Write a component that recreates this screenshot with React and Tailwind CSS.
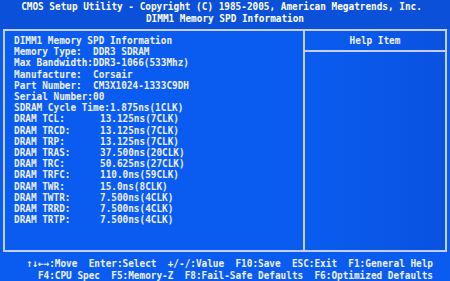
const SPD_LINES = [
  "DIMM1 Memory SPD Information",
  "Memory Type:  DDR3 SDRAM",
  "Max Bandwidth:DDR3-1066(533Mhz)",
  "Manufacture:  Corsair",
  "Part Number:  CM3X1024-1333C9DH",
  "Serial Number:00",
  "SDRAM Cycle Time:1.875ns(1CLK)",
];

const TIMINGS = [
  ["DRAM TCL:", "13.125ns(7CLK)"],
  ["DRAM TRCD:", "13.125ns(7CLK)"],
  ["DRAM TRP:", "13.125ns(7CLK)"],
  ["DRAM TRAS:", "37.500ns(20CLK)"],
  ["DRAM TRC:", "50.625ns(27CLK)"],
  ["DRAM TRFC:", "110.0ns(59CLK)"],
  ["DRAM TWR:", "15.0ns(8CLK)"],
  ["DRAM TWTR:", "7.500ns(4CLK)"],
  ["DRAM TRRD:", "7.500ns(4CLK)"],
  ["DRAM TRTP:", "7.500ns(4CLK)"],
];

// BIOS glyphs are taller than DejaVu's at this width
const tall = "origin-center scale-y-[1.15]";

export default function App() {
  return (
    <div className="flex h-[281px] w-[450px] flex-col overflow-hidden bg-[#0a5cf0] font-['DejaVu_Sans_Mono',monospace] text-[9.4px] font-bold text-[#eef1fa]">
      {/* title band */}
      <header className="flex h-[29px] shrink-0 flex-col items-center bg-[#0b50d8] pt-[1px] leading-[12px] whitespace-pre text-white">
        <div className={`pr-[7px] ${tall}`}>CMOS Setup Utility - Copyright (C) 1985-2005, American Megatrends, Inc.</div>
        <div className={tall}>DIMM1 Memory SPD Information</div>
      </header>

      {/* main box */}
      <div className="mx-[3px] flex h-[223px] shrink-0 border-2 border-[#c4cfee]">
        <div className="w-[300px] shrink-0 border-r-2 border-[#c4cfee] pl-[9px] pt-[3px] leading-[11.2px] whitespace-pre">
          {SPD_LINES.map((l) => (
            <div key={l} className={tall}>{l}</div>
          ))}
          {TIMINGS.map(([k, v]) => (
            <div key={k} className={`flex ${tall}`}>
              <span className="w-[86px] shrink-0">{k}</span>
              <span>{v}</span>
            </div>
          ))}
        </div>
        <div className="flex flex-1 flex-col bg-gradient-to-r from-[#0a5cf0] to-[#0a52e0]">
          <div className="flex h-[21px] items-center justify-center border-b-2 border-[#c4cfee] pt-[1px]">
            <span className={tall}>Help Item</span>
          </div>
        </div>
      </div>

      {/* key legend */}
      <footer className="flex flex-col items-end pr-[17px] pt-[6px] leading-[12px] whitespace-pre">
        <div className={tall}>↑↓←→:Move  Enter:Select  +/-/:Value  F10:Save  ESC:Exit  F1:General Help</div>
        <div className={tall}>F4:CPU Spec  F5:Memory-Z  F8:Fail-Safe Defaults  F6:Optimized Defaults</div>
      </footer>
    </div>
  );
}
